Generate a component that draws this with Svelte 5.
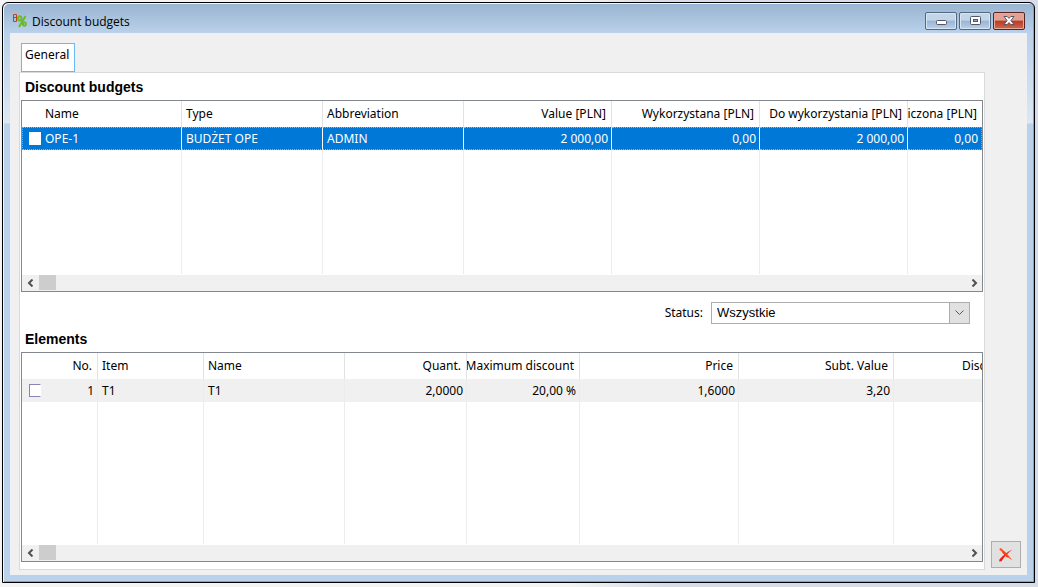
<script lang="ts">
  type Column = { label: string; width?: number; right?: boolean };

  const budgetColumns: Column[] = [
    { label: 'Name', width: 160 },
    { label: 'Type', width: 141 },
    { label: 'Abbreviation', width: 141 },
    { label: 'Value [PLN]', width: 148, right: true },
    { label: 'Wykorzystana [PLN]', width: 148, right: true },
    { label: 'Do wykorzystania [PLN]', width: 148, right: true },
    { label: 'iczona [PLN]', right: true },
  ];
  const budgetRow = ['OPE-1', 'BUDŻET OPE', 'ADMIN', '2 000,00', '0,00', '2 000,00', '0,00'];

  const elementColumns: Column[] = [
    { label: 'No.', width: 76, right: true },
    { label: 'Item', width: 106 },
    { label: 'Name', width: 141 },
    { label: 'Quant.', width: 122, right: true },
    { label: 'Maximum discount', width: 113, right: true },
    { label: 'Price', width: 159, right: true },
    { label: 'Subt. Value', width: 155, right: true },
    { label: 'Disc' },
  ];
  const elementRow = ['1', 'T1', 'T1', '2,0000', '20,00 %', '1,6000', '3,20', ''];

  let budgetChecked = $state(false);
  let elementChecked = $state(false);
  let status = $state('Wszystkie');
</script>

{#snippet scrollbar()}
  <div class="scrollbar">
    <button type="button" aria-label="Scroll left">
      <svg width="8" height="8" viewBox="0 0 8 8"><path d="M5.5 0.5 2 4l3.5 3.5" /></svg>
    </button>
    <div class="thumb"></div>
    <button type="button" class="end" aria-label="Scroll right">
      <svg width="8" height="8" viewBox="0 0 8 8"><path d="M2.5 0.5 6 4 2.5 7.5" /></svg>
    </button>
  </div>
{/snippet}

{#snippet head(columns: Column[])}
  <colgroup>
    {#each columns as column}
      <col style:width={column.width ? `${column.width}px` : 'auto'} />
    {/each}
  </colgroup>
  <thead>
    <tr>
      {#each columns as column, i}
        <th scope="col" class:first={i === 0}>
          <div class="cell" class:right={column.right} class:cut={column.label === 'Disc'}>
            <span>{column.label}</span>
          </div>
        </th>
      {/each}
    </tr>
  </thead>
{/snippet}

{#snippet filler(columns: Column[])}
  <tr class="filler" aria-hidden="true">
    {#each columns as _}<td></td>{/each}
  </tr>
{/snippet}

<div class="desktop">
  <div class="window">
    <header class="titlebar">
      <svg class="app-icon" width="15" height="15" viewBox="0 0 15 15" aria-hidden="true">
        <path d="M1.5 1.5h3v7h-3zM1.5 4.5h3" fill="none" stroke="#c0440c" />
        <g fill="none" stroke="#6cb92c" stroke-width="2">
          <path d="M13.5 3 7 14" />
          <ellipse cx="7.8" cy="5.4" rx="1.7" ry="2.2" />
          <ellipse cx="12.4" cy="11" rx="1.5" ry="1.8" />
        </g>
      </svg>
      <h1>Discount budgets</h1>
      <div class="caption-buttons">
        <button type="button" aria-label="Minimize">
          <svg width="16" height="12" viewBox="0 0 16 12">
            <rect x="3.5" y="5.5" width="10" height="4" rx="1" fill="#fff" stroke="#535666" />
          </svg>
        </button>
        <button type="button" aria-label="Maximize">
          <svg width="16" height="12" viewBox="0 0 16 12">
            <rect x="3.5" y="1.5" width="10" height="8" rx="1" fill="#fff" stroke="#535666" />
            <rect x="6.5" y="4.5" width="4" height="2" fill="#8fabcb" stroke="#535666" />
          </svg>
        </button>
        <button type="button" class="close" aria-label="Close">
          <svg width="16" height="12" viewBox="0 0 16 12">
            <path
              d="M3 1.5h3.2L8 3.4l1.8-1.9H13L9.9 5.6 13 9.5H9.8L8 7.6 6.2 9.5H3l3.1-3.9z"
              fill="#fff"
              stroke="#535666"
            />
          </svg>
        </button>
      </div>
    </header>

    <main class="client">
      <div class="sheet">
        <div class="tabs" role="tablist">
          <button type="button" role="tab" aria-selected="true">General</button>
        </div>

        <div class="panel">
          <h2>Discount budgets</h2>
          <section class="grid budgets">
            <div class="scroller">
              <table>
                {@render head(budgetColumns)}
                <tbody>
                  <tr class="selected">
                    {#each budgetRow as value, i}
                      <td>
                        <div class="cell" class:right={budgetColumns[i].right}>
                          {#if i === 0}
                            <input type="checkbox" aria-label="Select OPE-1" bind:checked={budgetChecked} />
                          {/if}
                          <span>{value}</span>
                        </div>
                      </td>
                    {/each}
                  </tr>
                  {@render filler(budgetColumns)}
                </tbody>
              </table>
            </div>
            {@render scrollbar()}
          </section>

          <div class="filter">
            <label for="status">Status:</label>
            <div class="select">
              <select id="status" bind:value={status}>
                <option>Wszystkie</option>
              </select>
              <span class="drop" aria-hidden="true">
                <svg width="9" height="6" viewBox="0 0 9 6"><path d="M0.5 0.5l4 4 4-4" /></svg>
              </span>
            </div>
          </div>

          <h2>Elements</h2>
          <section class="grid elements">
            <div class="scroller">
              <table>
                {@render head(elementColumns)}
                <tbody>
                  <tr class="striped">
                    {#each elementRow as value, i}
                      <td>
                        <div class="cell" class:right={elementColumns[i].right}>
                          {#if i === 0}
                            <input type="checkbox" aria-label="Select T1" bind:checked={elementChecked} />
                          {/if}
                          <span>{value}</span>
                        </div>
                      </td>
                    {/each}
                  </tr>
                  {@render filler(elementColumns)}
                </tbody>
              </table>
            </div>
            {@render scrollbar()}
          </section>
        </div>
      </div>

      <button type="button" class="cancel" aria-label="Cancel">
        <svg width="16" height="16" viewBox="0 0 16 16">
          <path d="M1.2 2.2 2.8 1C6.500 4 10.500 8 14.500 13.500 10 10.500 5.500 7 1.200 2.200z" fill="#ff5316" />
          <path d="M14.500 2.500C10 5.500 6.500 9.500 3.500 14.200L1.200 14.500 1.400 12.500C5 8.500 9 5 14.500 2.500z" fill="#ee1c10" />
          <path d="M5 5l5 5" stroke="#f8401a" stroke-width="2.200" />
        </svg>
      </button>
    </main>
  </div>
</div>

<style>
  :global(body) {
    margin: 0;
  }
  .desktop {
    box-sizing: border-box;
    height: 100vh;
    padding: 2px 3px 4px 2px;
    overflow: hidden;
    background: linear-gradient(90deg, #f4f4f4 0 55%, #d7dce8 64%);
    color: #000;
    font: 12px/16px 'Noto Sans', sans-serif;
  }
  button,
  select {
    margin: 0;
    padding: 0;
    color: inherit;
    font: inherit;
  }
  .window {
    box-sizing: border-box;
    height: 100%;
    display: flex;
    flex-direction: column;
    padding: 0 7px 7px;
    border: 1px solid #000;
    border-radius: 6px 6px 0 0;
    background: linear-gradient(#99b4d1 0, #b9d1ea 30px, #dce7f4 120px, #b9d1ea 121px);
    box-shadow:
      inset 1px 1px #eef5fc,
      inset -1px -1px #35c8dc;
  }
  .titlebar {
    flex: none;
    height: 30px;
    display: flex;
    align-items: center;
    padding: 0 2px;
  }
  .app-icon {
    margin-top: 5px;
  }
  h1 {
    flex: 1;
    margin: 8px 0 0 5px;
    font: 12px/16px 'Open Sans', 'Noto Sans', sans-serif;
  }
  .caption-buttons {
    display: flex;
    gap: 2px;
    margin-top: 5px;
  }
  .caption-buttons button {
    box-sizing: border-box;
    width: 32px;
    height: 18px;
    display: grid;
    place-items: center;
    border: 1px solid #54687f;
    border-radius: 2px;
    background: linear-gradient(#c3d5e9 0 45%, #99b5d3 50%, #b8d0ea);
    box-shadow: inset 0 0 0 1px #d8e5f3;
  }
  .caption-buttons .close {
    border-color: #5a2323;
    background: linear-gradient(#e3a093 0 45%, #b93a22 50%, #cf6a4d);
    box-shadow: inset 0 0 0 1px #e5aa9c;
  }
  .client {
    flex: 1;
    min-height: 0;
    display: flex;
    align-items: flex-end;
    gap: 6px;
    padding: 10px 6px 5px 9px;
    background: #f0f0f0;
  }
  .sheet {
    flex: 1;
    align-self: stretch;
    min-width: 0;
    display: flex;
    flex-direction: column;
  }
  .tabs {
    padding-left: 2px;
  }
  .tabs button {
    display: block;
    height: 29px;
    padding: 0 5px 5px 3px;
    border: 1px solid #6cb8f2;
    background: #fff;
  }
  .panel {
    flex: 1;
    min-height: 0;
    display: flex;
    flex-direction: column;
    padding: 6px 1px 7px;
    border: 1px solid #d9d9d9;
    background: #fff;
  }
  h2 {
    flex: none;
    margin: 0 0 5px 4px;
    font: bold 14px/16px 'Liberation Sans', sans-serif;
  }
  .grid {
    min-height: 0;
    display: flex;
    flex-direction: column;
    border: 1px solid #828790;
  }
  .budgets {
    flex: 190 1 0;
  }
  .elements {
    flex: 208 1 0;
  }
  .scroller {
    flex: 1;
    min-height: 0;
    padding-bottom: 1px;
    overflow: hidden;
  }
  table {
    width: 100%;
    height: 100%;
    table-layout: fixed;
    border-collapse: separate;
    border-spacing: 0;
  }
  th,
  td {
    box-sizing: border-box;
    padding: 0;
    overflow: hidden;
    border-right: 1px solid #ececec;
    font-weight: normal;
    text-align: left;
  }
  th {
    height: 26px;
    border-color: #e2e2e2;
  }
  td {
    height: 23px;
  }
  th:last-child,
  td:last-child {
    border-right: 0;
  }
  .filler td {
    height: auto;
  }
  .cell {
    display: flex;
    align-items: center;
    padding: 0 3px 0 4px;
    overflow: hidden;
    white-space: nowrap;
  }
  .right {
    justify-content: flex-end;
    padding-left: 0;
  }
  th .right {
    padding-right: 5px;
  }
  .budgets th.first .cell {
    padding-left: 23px;
  }
  .cell.cut {
    padding: 0 0 0 68px;
  }
  .cell input {
    appearance: none;
    flex: none;
    width: 12px;
    height: 13px;
    margin: 0 4px 0 3px;
    border: 1px solid #8c84ae;
    border-right-color: #fff;
    background: #fff;
  }
  .cell input:checked {
    background: #0078d7;
  }
  .right input {
    margin: 0 auto 0 7px;
  }
  .selected td {
    border-top: 1px dotted #f0a050;
    border-bottom: 1px dotted #f0a050;
    border-right-color: #fff;
    background: #0078d7;
    color: #fff;
  }
  .selected td:first-child {
    border-left: 1px dotted #ff8728;
  }
  .selected td:last-child {
    border-right: 1px dotted #ff8728;
  }
  .selected input {
    border-color: #fff;
    margin-left: 2px;
  }
  .striped td {
    background: #f0f0f0;
  }
  .scrollbar {
    flex: none;
    height: 16px;
    display: flex;
    background: #f0f0f0;
  }
  .scrollbar button {
    width: 17px;
    height: 15px;
    display: grid;
    place-items: center;
    border: 0;
    background: none;
  }
  .scrollbar path {
    fill: none;
    stroke: #505050;
    stroke-width: 2;
  }
  .thumb {
    width: 17px;
    height: 15px;
    background: #cdcdcd;
  }
  .scrollbar .end {
    margin-left: auto;
  }
  .filter {
    flex: none;
    display: flex;
    justify-content: flex-end;
    gap: 8px;
    padding: 10px 13px 7px 0;
  }
  .filter label {
    padding-top: 3px;
  }
  .select {
    position: relative;
    width: 259px;
    height: 22px;
  }
  select {
    appearance: none;
    box-sizing: border-box;
    width: 100%;
    height: 100%;
    padding: 0 24px 0 5px;
    border: 1px solid #adadad;
    border-radius: 0;
    background: #fff;
    font: 13px/16px 'Liberation Sans', sans-serif;
  }
  .drop {
    position: absolute;
    inset: 0 0 0 auto;
    box-sizing: border-box;
    width: 21px;
    display: grid;
    place-items: center;
    border: 1px solid #adadad;
    background: #e1e1e1;
    pointer-events: none;
  }
  .drop path {
    fill: none;
    stroke: #555;
  }
  .cancel {
    flex: none;
    box-sizing: border-box;
    width: 30px;
    height: 27px;
    display: grid;
    place-items: center;
    margin-bottom: 2px;
    border: 1px solid #adadad;
    background: #e1e1e1;
  }
</style>
